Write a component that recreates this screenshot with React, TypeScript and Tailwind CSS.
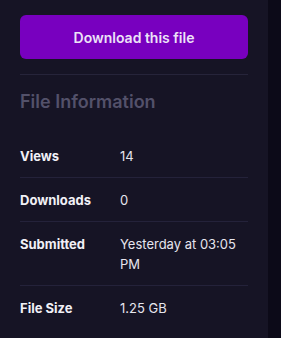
const rows = [
  { label: "Views", value: "14" },
  { label: "Downloads", value: "0" },
  { label: "Submitted", value: "Yesterday at 03:05 PM" },
  { label: "File Size", value: "1.25 GB" },
];

const App = () => {
  return (
    <div
      className="flex h-[338px] w-full bg-[#0c0a18]"
      style={{ fontFamily: "Inter, 'Liberation Sans', sans-serif" }}
    >
      <div className="w-[268px] h-full bg-[#161425] px-5 pt-[15px]">
        <button className="w-full h-[44px] rounded-md bg-[#7800bf] text-[14px] font-semibold text-[#ece3f7]">
          Download this file
        </button>
        <div className="mt-[15px] h-px bg-[#26243a]" />
        <h2 className="mt-[13px] text-[18px] leading-7 font-semibold text-[#53516a]">
          File Information
        </h2>
        <div className="mt-[18px]">
          {rows.map((row) => (
            <div
              key={row.label}
              className="flex border-b border-[#24223a] pt-3 pb-[11px] text-[13px] leading-5 last:border-b-0"
            >
              <div className="w-[100px] shrink-0 font-bold text-[#f1f0f6]">
                {row.label}
              </div>
              <div className="flex-1 text-[#e6e5ee]">{row.value}</div>
            </div>
          ))}
        </div>
      </div>
    </div>
  );
};

export default App;
